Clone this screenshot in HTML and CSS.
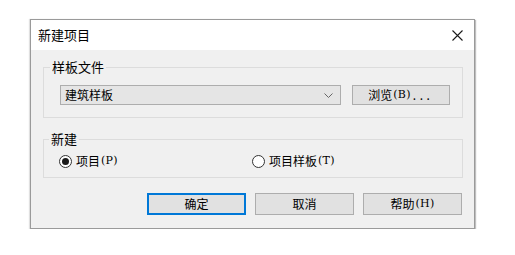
FILE: index.html
```html
<!DOCTYPE html>
<html lang="zh-CN">
<head>
<meta charset="utf-8">
<title>新建项目</title>
<link rel="stylesheet" href="styles.css">
</head>
<body>
<div class="dialog">
  <div class="titlebar">
    <span class="title">新建项目</span>
    <span class="close">
      <svg width="11" height="11" viewBox="0 0 11 11"><path d="M0.5 0.5 L10.5 10.5 M10.5 0.5 L0.5 10.5" stroke="#1a1a1a" stroke-width="1.1" fill="none"/></svg>
    </span>
  </div>
  <div class="body">
    <fieldset class="group group-template">
      <legend>样板文件</legend>
      <div class="row">
        <div class="combo">
          <span class="combo-text">建筑样板</span>
          <svg class="chev" width="9" height="5" viewBox="0 0 9 5"><path d="M0.5 0.5 L4.5 4.5 L8.5 0.5" stroke="#666" stroke-width="1" fill="none"/></svg>
        </div>
        <div class="btn browse">浏览<span class="paren">(B)</span><span class="dots">...</span></div>
      </div>
    </fieldset>
    <fieldset class="group group-new">
      <legend>新建</legend>
      <div class="radios">
        <label class="radio r1"><span class="dot checked"></span>项目<span class="paren">(P)</span></label>
        <label class="radio r2"><span class="dot"></span>项目样板<span class="paren">(T)</span></label>
      </div>
    </fieldset>
    <div class="buttons">
      <div class="btn default">确定</div>
      <div class="btn">取消</div>
      <div class="btn">帮助<span class="paren">(H)</span></div>
    </div>
  </div>
</div>
</body>
</html>
```
FILE: styles.css
```css
html, body {
  margin: 0;
  padding: 0;
  background: #ffffff;
}
body {
  padding: 19px 0 0 30px;
  font-family: "Noto Sans CJK SC", "Noto Sans", sans-serif;
  font-size: 12px;
  color: #000;
}
.dialog {
  width: 443px;
  border: 1px solid #9a9a9a;
  box-shadow: 1px 1px 1px rgba(0,0,0,0.25), -1px 0 1px rgba(0,0,0,0.12);
  background: #f0f0f0;
}
.titlebar {
  height: 30px;
  background: #ffffff;
  display: flex;
  align-items: center;
  justify-content: space-between;
  padding: 0 11px 0 7px;
}
.title {
  font-size: 13px;
  line-height: 16px;
}
.close {
  display: flex;
  width: 11px;
  height: 11px;
}
.body {
  padding: 9px 11px 13px 12px;
}
.group {
  margin: 0;
  border: 1px solid #dcdcdc;
  min-width: 0;
}
.group legend {
  font-size: 13px;
  line-height: 16px;
  padding: 0 2px;
  margin-left: -10px;
}
.group-template {
  padding: 10px 12px 12px 16px;
}
.row {
  display: flex;
  gap: 11px;
}
.combo {
  width: 269px;
  height: 18px;
  border: 1px solid #adadad;
  background: #e5e5e5;
  display: flex;
  align-items: center;
  justify-content: space-between;
  padding: 0 7px 0 4px;
}
.combo-text {
  line-height: 16px;
}
.chev {
  display: block;
}
.paren {
  font-family: "DejaVu Serif", "Liberation Serif", serif;
  font-size: 11px;
  letter-spacing: 0.3px;
  margin-left: 1px;
}
.dots {
  letter-spacing: 3.5px;
  margin-left: 2px;
}
.btn {
  height: 19px;
  border: 1px solid #adadad;
  background: #e1e1e1;
  display: flex;
  align-items: center;
  justify-content: center;
  line-height: 16px;
  width: 97px;
}
.browse {
  width: 97px;
  height: 18px;
}
.group-new {
  margin-top: 13px;
  padding: 6px 12px 8px 15px;
}
.radios {
  display: flex;
  height: 16px;
  align-items: center;
}
.radio {
  display: flex;
  align-items: center;
  line-height: 16px;
}
.r1 {
  width: 193px;
}
.dot {
  width: 11px;
  height: 11px;
  border: 1px solid #333;
  border-radius: 50%;
  background: #fff;
  display: flex;
  align-items: center;
  justify-content: center;
  margin-right: 4px;
}
.dot.checked::after {
  content: "";
  width: 7px;
  height: 7px;
  border-radius: 50%;
  background: #1a1a1a;
}
.buttons {
  margin-top: 15px;
  display: flex;
  justify-content: flex-end;
  gap: 9px;
  padding-right: 1px;
}
.buttons .btn {
  height: 20px;
}
.btn.default {
  border: 2px solid #0078d7;
  width: 95px;
  height: 18px;
}
```
